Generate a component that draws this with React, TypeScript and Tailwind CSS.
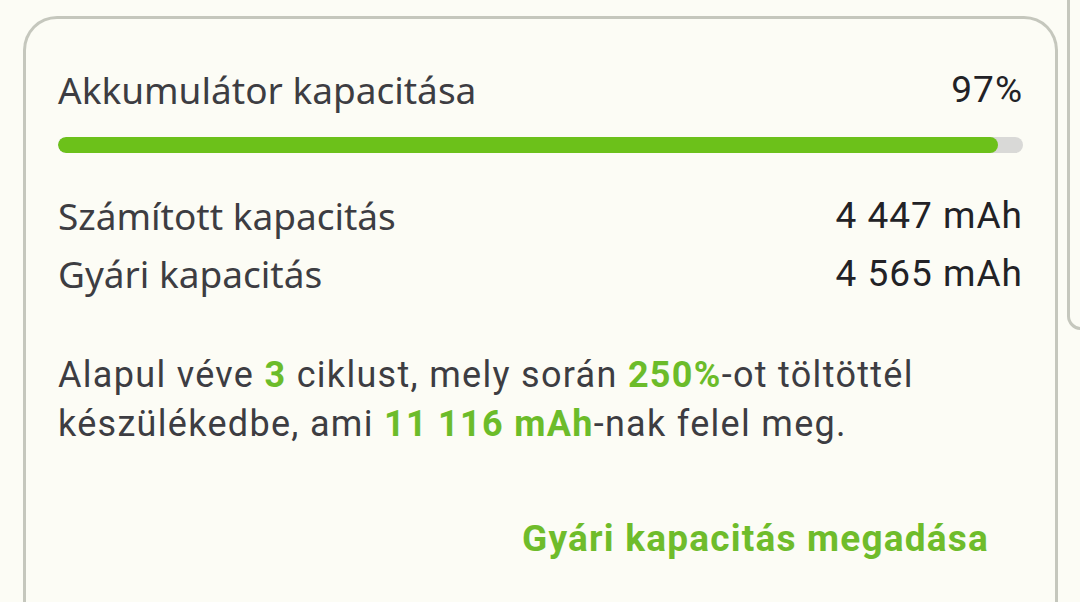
export default function App() {
  const label = "font-['Noto_Sans',sans-serif] text-[#3d3d42] text-[37px] leading-[40px]";
  const value = "font-['Roboto',sans-serif] text-[#222226] text-[37px] leading-[40px] tracking-[1px]";
  return (
    <div className="w-[1080px] h-[602px] overflow-hidden bg-[#fcfcf5] flex items-start">
      <div className="ml-[23px] mt-[16px] w-[1035px] h-[600px] shrink-0 rounded-t-[34px] border-[3px] border-b-0 border-[#c5c7bd] px-[32px] pt-[51px]">
        <div className="flex justify-between items-center h-[40px]">
          <span className={label}>Akkumulátor kapacitása</span>
          <span className={value}>97%</span>
        </div>
        <div className="mt-[27px] h-[16px] rounded-full bg-[#d9d9d7] overflow-hidden">
          <div className="h-full rounded-full bg-[#6cc11a]" style={{ width: '97.4%' }} />
        </div>
        <div className="mt-[43px] flex flex-col gap-[18px]">
          <div className="flex justify-between items-center h-[40px]">
            <span className={label}>Számított kapacitás</span>
            <span className={value}>4 447 mAh</span>
          </div>
          <div className="flex justify-between items-center h-[40px]">
            <span className={label}>Gyári kapacitás</span>
            <span className={value}>4 565 mAh</span>
          </div>
        </div>
        <p className="mt-[57px] font-['Roboto',sans-serif] text-[36px] leading-[49px] tracking-[1.3px] text-[#3d3d42]">
          Alapul véve <b className="text-[#6cbc2a]">3</b> ciklust, mely során{' '}
          <b className="text-[#6cbc2a]">250%</b>-ot töltöttél
          <br />
          készülékedbe, ami <b className="text-[#6cbc2a]">11 116 mAh</b>-nak felel meg.
        </p>
        <div className="mt-[70px] flex justify-end pr-[34px] h-[40px] items-center">
          <span className="font-['Roboto',sans-serif] font-bold text-[37px] leading-[40px] tracking-[1.2px] text-[#6fbc2b]">
            Gyári kapacitás megadása
          </span>
        </div>
      </div>
      <div className="ml-[9px] w-[40px] h-[330px] shrink-0 border-l-[3px] border-b-[3px] border-[#c5c7bd] rounded-bl-[14px]" />
    </div>
  );
}
